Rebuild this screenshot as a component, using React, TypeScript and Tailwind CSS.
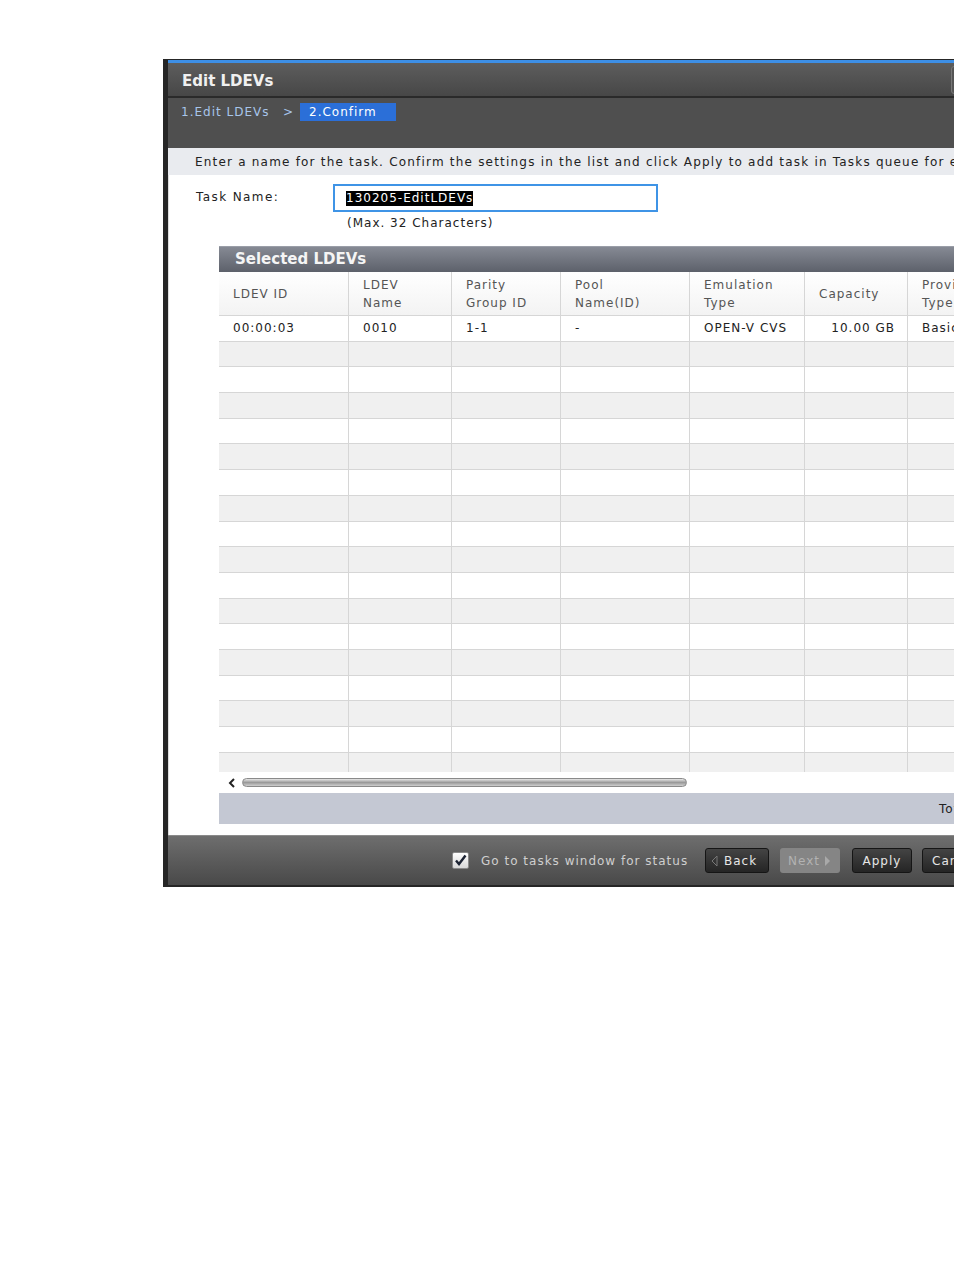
import React from "react";

const cols = [
  { w: 130, h: ["LDEV ID"], v: "00:00:03", right: false },
  { w: 103, h: ["LDEV", "Name"], v: "0010", right: false },
  { w: 109, h: ["Parity", "Group ID"], v: "1-1", right: false },
  { w: 129, h: ["Pool", "Name(ID)"], v: "-", right: false },
  { w: 115, h: ["Emulation", "Type"], v: "OPEN-V CVS", right: false },
  { w: 103, h: ["Capacity"], v: "10.00 GB", right: true },
  { w: 104, h: ["Provisioning", "Type"], v: "Basic", right: false },
];

function Row({ idx }: { idx: number }) {
  const bg = idx % 2 === 1 ? "bg-[#f0f0f0]" : "bg-white";
  return (
    <div className={`flex h-[25.7px] shrink-0 border-b border-[#d6d6d6] ${bg}`}>
      {cols.map((c, i) => (
        <div
          key={i}
          style={{ width: c.w }}
          className={`shrink-0 border-r border-[#d6d6d6] flex items-center text-[12px] text-[#222] whitespace-nowrap overflow-hidden ${
            c.right ? "justify-end pr-[12px]" : "pl-[14px]"
          }`}
        >
          {idx === 0 ? c.v : ""}
        </div>
      ))}
    </div>
  );
}

export default function App() {
  return (
    <div
      className="w-[954px] h-[1270px] bg-white overflow-hidden"
      style={{ fontFamily: '"DejaVu Sans", Verdana, sans-serif' }}
    >
      <div className="ml-[163px] mt-[59px] w-[900px] border-l-[5px] border-t border-b-2 border-[#262626] bg-[#262626] tracking-[1px]">
        {/* blue top line */}
        <div className="h-[3px] bg-[#3d8fe6]" />
        {/* title bar */}
        <div className="h-[35px] flex items-center pt-[3px] bg-gradient-to-b from-[#5d5d5d] to-[#474747] border-b-2 border-[#2a2a2a]">
          <div className="pl-[14px] w-[783px] text-[15px] font-bold text-[#f0f0f0] tracking-[0px]">Edit LDEVs</div>
          <div className="h-[28px] w-[26px] -mt-[3px] rounded-[3px] border border-[#777] bg-[#555]" />
        </div>
        {/* breadcrumb */}
        <div className="h-[50px] bg-[#4f4f4f] pt-[5px]">
          <div className="flex items-center text-[12px]">
            <span className="pl-[13px] w-[115px] text-[#a7c5ea] whitespace-nowrap">1.Edit LDEVs</span>
            <span className="w-[17px] text-[#a7c5ea]">&gt;</span>
            <span className="h-[18px] w-[96px] bg-[#2b6fd8] text-white pl-[9px] flex items-center whitespace-nowrap">2.Confirm</span>
          </div>
        </div>
        {/* instruction */}
        <div className="h-[27px] bg-[#e9ebef] flex items-center pl-[27px] text-[12px] text-[#222] tracking-[1.2px] whitespace-nowrap overflow-hidden">
          Enter a name for the task. Confirm the settings in the list and click Apply to add task in Tasks queue for execution.
        </div>
        {/* body */}
        <div className="bg-white border-l border-[#dcdcdc] pt-[9px] pb-[11px]">
          <div className="flex">
            <div className="pl-[27px] w-[164px] pt-[4px] text-[12px] text-[#222] tracking-[1.4px] whitespace-nowrap">Task Name:</div>
            <div className="flex flex-col">
              <div className="h-[28px] w-[325px] border-2 border-[#3f94e6] bg-white flex items-center pl-[11px]">
                <span className="bg-black text-white text-[12px] leading-[15px] tracking-[1px]">130205-EditLDEVs</span>
              </div>
              <div className="pl-[14px] pt-[2px] text-[12px] text-[#222] whitespace-nowrap">(Max. 32 Characters)</div>
            </div>
          </div>
          {/* table panel */}
          <div className="ml-[50px] mt-[14px] w-[793px]">
            <div className="h-[26px] flex items-center pl-[16px] bg-gradient-to-b from-[#868a94] to-[#5d616b] border-t border-[#9a9ea8] text-[15px] font-bold text-[#f5f5f5] tracking-[0px]">
              Selected LDEVs
            </div>
            <div className="flex h-[44px] border-b border-[#d6d6d6] bg-gradient-to-b from-white to-[#f3f3f3]">
              {cols.map((c, i) => (
                <div
                  key={i}
                  style={{ width: c.w }}
                  className="shrink-0 border-r border-[#d6d6d6] flex flex-col justify-center pl-[14px] text-[12px] leading-[18px] text-[#555] whitespace-nowrap overflow-hidden"
                >
                  {c.h.map((l, j) => (
                    <div key={j}>{l}</div>
                  ))}
                </div>
              ))}
            </div>
            <div className="h-[456px] overflow-hidden flex flex-col">
              {Array.from({ length: 18 }).map((_, i) => (
                <Row key={i} idx={i} />
              ))}
            </div>
            {/* scrollbar */}
            <div className="h-[21px] bg-white flex items-center pl-[9px]">
              <svg width="8" height="10" viewBox="0 0 8 10">
                <path d="M6 1 L2 5 L6 9" stroke="#222" strokeWidth="2" fill="none" />
              </svg>
              <div className="ml-[6px] h-[9px] w-[445px] rounded-full border border-[#8a8a8a] bg-gradient-to-b from-[#e8e8e8] via-[#9a9a9a] to-[#cfcfcf]" />
            </div>
            <div className="h-[31px] bg-[#c4c8d3] flex items-center pl-[720px] text-[12px] text-[#222] whitespace-nowrap">
              Total: 1
            </div>
          </div>
        </div>
        {/* bottom bar */}
        <div className="h-[50px] bg-gradient-to-b from-[#6e6e6e] to-[#494949] border-t border-[#8a8a8a] flex items-center pl-[284px]">
          <div className="h-[17px] w-[17px] shrink-0 rounded-[2px] border border-[#8a8a8a] bg-gradient-to-b from-white to-[#d8d8d8] flex items-center justify-center">
            <svg width="13" height="13" viewBox="0 0 13 13">
              <path d="M2 6.5 L5 10 L11.5 1.5" stroke="#1c2333" strokeWidth="2.4" fill="none" />
            </svg>
          </div>
          <span className="ml-[12px] w-[208px] shrink-0 text-[12px] text-[#cfcfcf] whitespace-nowrap overflow-hidden">Go to tasks window for status</span>
          <div className="ml-[16px] h-[25px] w-[64px] shrink-0 rounded-[3px] border border-[#151515] bg-gradient-to-b from-[#444] to-[#252525] flex items-center pl-[5px] text-[12px] text-[#e6e6e6]">
            <svg width="7" height="12" viewBox="0 0 7 12" className="mr-[6px]">
              <path d="M6 1 L1 6 L6 11 Z" stroke="#777" strokeWidth="1" fill="none" />
            </svg>
            Back
          </div>
          <div className="ml-[11px] h-[25px] w-[60px] shrink-0 rounded-[3px] bg-[#858585] flex items-center pl-[8px] text-[12px] text-[#b2b2b2]">
            Next
            <svg width="7" height="12" viewBox="0 0 7 12" className="ml-[4px]">
              <path d="M1 1 L6 6 L1 11 Z" fill="#a9a9a9" />
            </svg>
          </div>
          <div className="ml-[12px] h-[25px] w-[60px] shrink-0 rounded-[3px] border border-[#151515] bg-gradient-to-b from-[#444] to-[#252525] flex items-center justify-center text-[12px] text-[#e6e6e6]">
            Apply
          </div>
          <div className="ml-[10px] h-[25px] w-[70px] shrink-0 rounded-[3px] border border-[#151515] bg-gradient-to-b from-[#444] to-[#252525] flex items-center pl-[9px] text-[12px] text-[#e6e6e6]">
            Cancel
          </div>
        </div>
      </div>
    </div>
  );
}
